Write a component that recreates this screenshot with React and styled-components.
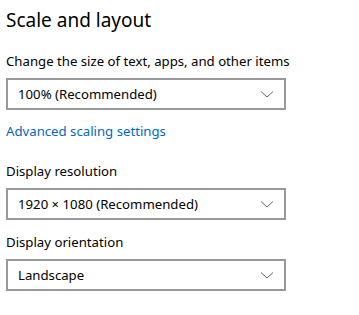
import React from 'react';
import styled, {createGlobalStyle} from 'styled-components';

const GlobalStyle = createGlobalStyle`
  body {
    margin: 0;
    background: #ffffff;
    font-family: "Noto Sans", "Open Sans", sans-serif;
    color: #000000;
  }
`;

const Page = styled.div`
  padding: 6px 0 0 6px;
  width: 359px;
  height: 315px;
  box-sizing: border-box;
  overflow: hidden;
`;

const Title = styled.h2`
  margin: 0;
  font-size: 19px;
  font-weight: 400;
  line-height: 28px;
`;

const Label = styled.div`
  font-size: 13.2px;
  line-height: 20px;
  margin-top: ${p => p.$top || 0}px;
`;

const Link = styled.a`
  display: block;
  width: fit-content;
  font-size: 13.2px;
  line-height: 20px;
  color: #0068c9;
  text-decoration: none;
  margin-top: 11px;
`;

const Select = styled.div`
  margin-top: 7px;
  width: 280px;
  height: 32px;
  box-sizing: border-box;
  border: 2px solid #999999;
  display: flex;
  align-items: center;
  justify-content: space-between;
  padding: 0 10px 0 10px;
  font-size: 13.2px;
`;

const Chevron = () => (
    <svg width="14" height="8" viewBox="0 0 14 8">
        <path d="M1 1.5 L7 7 L13 1.5" fill="none" stroke="#666" strokeWidth="1"/>
    </svg>
);

const Dropdown = ({value}) => (
    <Select>
        <span>{value}</span>
        <Chevron/>
    </Select>
);

export default function App() {
    return (
        <Page>
            <GlobalStyle/>
            <Title>Scale and layout</Title>
            <Label $top={17}>Change the size of text, apps, and other items</Label>
            <Dropdown value="100% (Recommended)"/>
            <Link href="#">Advanced scaling settings</Link>
            <Label $top={20}>Display resolution</Label>
            <Dropdown value="1920 × 1080 (Recommended)"/>
            <Label $top={12}>Display orientation</Label>
            <Dropdown value="Landscape"/>
        </Page>
    );
}
